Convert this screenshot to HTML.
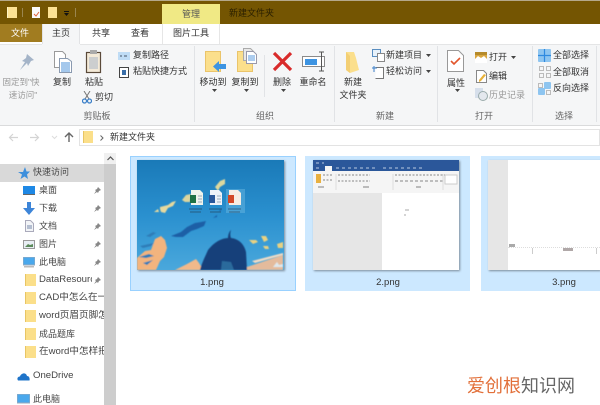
<!DOCTYPE html>
<html><head><meta charset="utf-8">
<style>
html,body{margin:0;padding:0;background:#fff}
#p{position:relative;width:600px;height:405px;overflow:hidden;background:#fff;font:9px/12px "Liberation Sans","Noto Sans CJK SC",sans-serif;color:#333;filter:blur(.35px)}
#p div,#p span,#p svg{position:absolute}
.t{white-space:nowrap}
.c{text-align:center;transform:translateX(-50%)}
.g{color:#a0a0a0}
.sep{width:1px;background:#e1e3e6;top:46px;height:76px}
.n{left:39px;color:#444;white-space:nowrap;width:65px;overflow:hidden}
.l{font-size:9.600px}
.pin{left:94px;width:7px;height:7px}
.f{left:25px;width:10px;height:12px;background:#fbdf8a;border-left:1px solid #e8c564}
</style></head><body>
<div id="p">
<!-- title bar -->
<div style="left:0;top:0;width:600px;height:24px;background:#745502"></div>
<div style="left:0;top:0;width:600px;height:1px;background:#b5a88a"></div>
<div style="left:7px;top:7px;width:9px;height:11px;background:#fde293;border-left:1px solid #fff2c2"></div>
<div style="left:22px;top:8px;width:1px;height:9px;background:#9a8650"></div>
<div style="left:32px;top:7px;width:8px;height:11px;background:#fafafa"></div>
<svg style="left:32px;top:9px" width="9" height="9"><path d="M2 5l2 2 3-4" fill="none" stroke="#e0623a" stroke-width="1"/></svg>
<div style="left:48px;top:7px;width:9px;height:11px;background:#fde293"></div>
<div style="left:64px;top:11px;width:5px;height:1px;background:#111"></div>
<svg style="left:64px;top:13px" width="6" height="3"><path d="M0 0h5l-2.500 3z" fill="#111"/></svg>
<div style="left:75px;top:8px;width:1px;height:9px;background:#9a8650"></div>
<div style="left:162px;top:4px;width:58px;height:20px;background:#f0e985"></div>
<div class="t c" style="left:191px;top:8px;color:#555">管理</div>
<div class="t" style="left:229px;top:7px;color:#2b2000">新建文件夹</div>
<!-- tabs -->
<div style="left:0;top:24px;width:42px;height:18px;background:#a17c20"></div>
<div class="t c" style="left:20px;top:27px;color:#fff">文件</div>
<div style="left:42px;top:24px;width:38px;height:21px;background:#f5f6f7;border-left:1px solid #e2e3e5;border-right:1px solid #e2e3e5;box-sizing:border-box"></div>
<div class="t c" style="left:61px;top:27px;color:#333">主页</div>
<div class="t c" style="left:101px;top:27px">共享</div>
<div class="t c" style="left:140px;top:27px">查看</div>
<div style="left:162px;top:24px;width:58px;height:20px;background:#fff;border-left:1px solid #e6e6e6;border-right:1px solid #e6e6e6;box-sizing:border-box"></div>
<div class="t c" style="left:191px;top:27px">图片工具</div>
<!-- ribbon -->
<div style="left:0;top:44px;width:600px;height:81px;background:#f5f6f7;border-bottom:1px solid #dadbdc"></div>
<div style="left:0;top:44px;width:42px;height:1px;background:#e4e5e6"></div>
<div style="left:80px;top:44px;width:520px;height:1px;background:#e4e5e6"></div>
<div class="sep" style="left:194px"></div><div class="sep" style="left:334px"></div><div class="sep" style="left:437px"></div><div class="sep" style="left:532px"></div><div class="sep" style="left:596px"></div>
<div class="sep" style="left:264px;top:55px;height:42px"></div>
<!-- pin -->
<svg style="left:16px;top:53px" width="20" height="18"><path d="M11 1l7 6-3 1-3 5-1 -3-7 7 5-8-3-1 4-3z" fill="#a4b4c8"/></svg>
<div class="t c g" style="left:21px;top:76px;font-size:8.500px;color:#999">固定到"快</div>
<div class="t c g" style="left:23px;top:89px;font-size:8.500px;color:#999">速访问"</div>
<!-- copy -->
<svg style="left:53px;top:50px" width="20" height="24"><path d="M1.500 1.500h8l3 3v13h-11z" fill="#fff" stroke="#9a9a9a"/><path d="M6.500 8.500h8l4 3v11h-12z" fill="#fff" stroke="#8a9ab0"/><path d="M8 13h9M8 15h9M8 17h9M8 19h9M8 21h9" stroke="#4a90d8" stroke-width="1"/></svg>
<div class="t c" style="left:62px;top:76px">复制</div>
<!-- paste -->
<svg style="left:85px;top:49px" width="18" height="25"><rect x="1.500" y="3.500" width="14" height="20" fill="#f4ead8" stroke="#5a4a3a" stroke-width="1.200"/><rect x="5" y="1" width="7" height="4" fill="#aaa"/><path d="M4 9h9M4 11h9M4 13h9M4 15h9M4 17h9M4 19h9" stroke="#8aa0c0" stroke-width=".8"/></svg>
<div class="t c" style="left:94px;top:76px">粘贴</div>
<svg style="left:82px;top:91px" width="10" height="13"><path d="M2 0l5 8M8 0L3 8" stroke="#777" fill="none"/><circle cx="2.500" cy="10" r="2" fill="none" stroke="#3a7fc8" stroke-width="1.200"/><circle cx="7.500" cy="10" r="2" fill="none" stroke="#3a7fc8" stroke-width="1.200"/></svg>
<div class="t" style="left:95px;top:91px">剪切</div>
<div style="left:118px;top:52px;width:12px;height:8px;background:#bfdcf5"></div>
<svg style="left:119px;top:53px" width="10" height="6"><path d="M1 3h2M5 3h3" stroke="#456" stroke-width="1"/></svg>
<div class="t" style="left:133px;top:49px">复制路径</div>
<svg style="left:119px;top:66px" width="11" height="12"><rect x=".5" y="1.500" width="9" height="10" fill="#fff" stroke="#444"/><rect x="3" y="4" width="4" height="5" fill="#3a6ea8"/></svg>
<div class="t" style="left:133px;top:65px">粘贴快捷方式</div>
<div class="t c" style="left:97px;top:110px;color:#666">剪贴板</div>
<!-- move to -->
<div style="left:205px;top:51px;width:16px;height:21px;background:#fbdf8c;border:1px solid #eac46a;box-sizing:border-box"></div>
<svg style="left:213px;top:60px" width="13" height="13"><path d="M0 6.500L6 1v3h7v5H6v3z" fill="#3d94e2"/></svg>
<div class="t c" style="left:213px;top:76px">移动到</div>
<svg style="left:212px;top:89px" width="5" height="3"><path d="M0 0h5L2.500 3z" fill="#444"/></svg>
<!-- copy to -->
<div style="left:237px;top:51px;width:16px;height:21px;background:#fbdf8c;border:1px solid #eac46a;box-sizing:border-box"></div>
<svg style="left:243px;top:48px" width="14" height="17"><path d="M.5 .5h7l3 3v9H.5z" fill="#e8e8e8" stroke="#aaa"/><path d="M3.500 3.500h7l3 3v9H3.500z" fill="#fff" stroke="#99a"/><path d="M5 8h7M5 10h7M5 12h7" stroke="#5a9ade"/></svg>
<div class="t c" style="left:245px;top:76px">复制到</div>
<svg style="left:244px;top:89px" width="5" height="3"><path d="M0 0h5L2.500 3z" fill="#444"/></svg>
<!-- delete -->
<svg style="left:272px;top:51px" width="21" height="21"><path d="M2 2l17 17M19 2L2 19" stroke="#d92b2b" stroke-width="3.200"/></svg>
<div class="t c" style="left:282px;top:76px">删除</div>
<svg style="left:281px;top:89px" width="5" height="3"><path d="M0 0h5L2.500 3z" fill="#444"/></svg>
<!-- rename -->
<svg style="left:302px;top:51px" width="24" height="21"><rect x=".5" y="5.500" width="22" height="10" fill="#fff" stroke="#8a8a8a"/><rect x="3" y="8" width="12" height="6" fill="#3d94e2"/><path d="M17 1h5M17 20h5M19.500 1v19" stroke="#555" fill="none"/></svg>
<div class="t c" style="left:313px;top:76px">重命名</div>
<div class="t c" style="left:265px;top:110px;color:#666">组织</div>
<!-- new folder -->
<svg style="left:345px;top:51px" width="16" height="22"><path d="M1 1h8l2 6 3 12-9 3-4-3z" fill="#fbdf8c"/><path d="M1 1l0 18 4 3V5z" fill="#f3cf74"/></svg>
<div class="t c" style="left:353px;top:76px">新建</div>
<div class="t c" style="left:353px;top:89px">文件夹</div>
<svg style="left:372px;top:49px" width="13" height="13"><rect x=".5" y=".5" width="8" height="7" fill="#e8f2fb" stroke="#5a8ec0"/><rect x="5.500" y="4.500" width="7" height="8" fill="#fff" stroke="#888"/></svg>
<div class="t" style="left:386px;top:49px">新建项目</div>
<svg style="left:426px;top:54px" width="5" height="3"><path d="M0 0h5L2.500 3z" fill="#444"/></svg>
<svg style="left:372px;top:65px" width="12" height="14"><path d="M3.500 2.500h8v11h-8" fill="#fff" stroke="#777"/><path d="M0 3h5M2 1v6" stroke="#3a7fc8" fill="none"/></svg>
<div class="t" style="left:386px;top:65px">轻松访问</div>
<svg style="left:426px;top:70px" width="5" height="3"><path d="M0 0h5L2.500 3z" fill="#444"/></svg>
<div class="t c" style="left:385px;top:110px;color:#666">新建</div>
<!-- properties -->
<svg style="left:447px;top:50px" width="18" height="23"><path d="M.5 .5h11l5 5v16H.5z" fill="#fff" stroke="#999"/><path d="M4 11l3 3 6-6" fill="none" stroke="#e2562c" stroke-width="1.600"/></svg>
<div class="t c" style="left:456px;top:77px">属性</div>
<svg style="left:455px;top:89px" width="5" height="3"><path d="M0 0h5L2.500 3z" fill="#444"/></svg>
<svg style="left:475px;top:52px" width="12" height="11"><rect width="12" height="11" fill="#fff"/><rect width="12" height="4" fill="#b58a2a"/><path d="M0 7l3-3 3 2 3-2 3 3v-4H0z" fill="#d9a640"/></svg>
<div class="t" style="left:489px;top:51px">打开</div>
<svg style="left:511px;top:56px" width="5" height="3"><path d="M0 0h5L2.500 3z" fill="#444"/></svg>
<svg style="left:476px;top:70px" width="11" height="13"><path d="M.5 .5h7l3 3v9H.5z" fill="#fff" stroke="#888"/><path d="M3 10l5-6 2 1-5 6-2 1z" fill="#e8b23a"/></svg>
<div class="t" style="left:489px;top:70px">编辑</div>
<svg style="left:475px;top:88px" width="13" height="13"><rect x="0" y="0" width="8" height="10" fill="#d6dfeb"/><circle cx="8" cy="8" r="4.500" fill="#e4e8ee" stroke="#9aa"/></svg>
<div class="t" style="left:489px;top:89px;color:#999">历史记录</div>
<div class="t c" style="left:484px;top:110px;color:#666">打开</div>
<!-- select -->
<svg style="left:538px;top:49px" width="13" height="13"><rect width="13" height="13" rx="1" fill="#8ec5f0"/><path d="M6.500 0v13M0 6.500h13" stroke="#2f8ae0" stroke-width="1.200"/></svg>
<div class="t" style="left:553px;top:49px">全部选择</div>
<svg style="left:539px;top:66px" width="12" height="12"><rect x=".5" y=".5" width="4" height="4" fill="none" stroke="#bbb"/><rect x="7.500" y=".5" width="4" height="4" fill="none" stroke="#bbb"/><rect x=".5" y="7.500" width="4" height="4" fill="none" stroke="#bbb"/><rect x="7.500" y="7.500" width="4" height="4" fill="none" stroke="#bbb"/></svg>
<div class="t" style="left:553px;top:66px">全部取消</div>
<svg style="left:538px;top:82px" width="13" height="13"><rect x="6" y="0" width="7" height="7" rx="1" fill="#8ec5f0"/><rect x="0" y="6" width="7" height="7" rx="1" fill="#8ec5f0"/><rect x=".5" y="1.500" width="4" height="4" fill="none" stroke="#bbb"/><rect x="8.500" y="8.500" width="4" height="4" fill="none" stroke="#bbb"/></svg>
<div class="t" style="left:553px;top:82px">反向选择</div>
<div class="t c" style="left:564px;top:110px;color:#666">选择</div>
<!-- address -->
<svg style="left:8px;top:132px" width="50" height="11"><path d="M10 5.500H2M5 2L1.500 5.500 5 9" fill="none" stroke="#d4d4d4" stroke-width="1.200"/><path d="M32 5.500h8M37 2l3.500 3.500L37 9" transform="translate(-10 0)" fill="none" stroke="#d4d4d4" stroke-width="1.200"/><path d="M44 4l2.500 2.500L49 4" fill="none" stroke="#ddd"/></svg>
<svg style="left:63px;top:131px" width="12" height="12"><path d="M6 11V2M2 6l4-4 4 4" fill="none" stroke="#666" stroke-width="1.400"/></svg>
<div style="left:79px;top:129px;width:521px;height:17px;box-sizing:border-box;border:1px solid #e3e3e3;background:#fff"></div>
<div style="left:83px;top:131px;width:9px;height:12px;background:#fbdf8a;border-left:1px solid #e8c564"></div>
<svg style="left:100px;top:135px" width="4" height="6"><path d="M.5 .5L3 3 .5 5.500" fill="none" stroke="#666"/></svg>
<div class="t" style="left:110px;top:131px">新建文件夹</div>
<!-- nav pane -->
<div style="left:0;top:164px;width:104px;height:18px;background:#d9d9d9"></div>
<div style="left:104px;top:153px;width:12px;height:252px;background:#f0f0f0"></div>
<div style="left:104px;top:164px;width:12px;height:241px;background:#cdcdcd"></div>
<svg style="left:107px;top:156px" width="7" height="5"><path d="M.5 4L3.500 1 6.500 4" fill="none" stroke="#555" stroke-width="1.200"/></svg>
<svg style="left:18px;top:167px" width="12" height="12"><path d="M7 0l1.500 4.500H12L9 7.500 10 12 6.500 9.500 2.500 12 4 7.500 0 5h5z" fill="#3d8fdc"/></svg>
<div class="n" style="left:33px;top:166px">快速访问</div>
<div style="left:23px;top:186px;width:12px;height:8px;background:#1e88e5;border-bottom:1px solid #666"></div>
<div class="n" style="top:184px">桌面</div>
<svg style="left:23px;top:202px" width="12" height="13"><path d="M4 0h4v6h4l-6 7-6-7h4z" fill="#3d85d8"/></svg>
<div class="n" style="top:202px">下载</div>
<svg style="left:25px;top:220px" width="9" height="12"><path d="M.5 .5h5l3 3v8H.5z" fill="#f2f4f7" stroke="#aab"/><path d="M2 6h5M2 8h5" stroke="#78a"/></svg>
<div class="n" style="top:220px">文档</div>
<svg style="left:23px;top:240px" width="12" height="9"><rect x=".5" y=".5" width="11" height="8" fill="#e8eef4" stroke="#999"/><path d="M2 7l3-3 2 1 3-1v3z" fill="#5b8a5a"/></svg>
<div class="n" style="top:238px">图片</div>
<svg style="left:23px;top:257px" width="12" height="11"><rect width="12" height="8" fill="#4aa8ec" stroke="#9ab"/><rect x="1" y="9" width="10" height="1.500" fill="#bbb"/></svg>
<div class="n" style="top:256px">此电脑</div>
<div class="n l" style="top:274px;width:53px">DataResource</div>
<div class="n l" style="top:292px;width:65px">CAD中怎么在一</div>
<div class="n l" style="top:310px;width:65px">word页眉页脚怎</div>
<div class="n" style="top:328px">成品题库</div>
<div class="n l" style="top:346px;width:65px">在word中怎样把</div>
<div class="f" style="top:274px"></div><div class="f" style="top:292px"></div><div class="f" style="top:310px"></div><div class="f" style="top:328px"></div><div class="f" style="top:346px"></div>
<svg class="pin" style="top:187px"><path d="M4 0l3 3-2 1-1 2-1-1-3 2 2-3-1-1 2-1z" fill="#888"/></svg>
<svg class="pin" style="top:205px"><path d="M4 0l3 3-2 1-1 2-1-1-3 2 2-3-1-1 2-1z" fill="#888"/></svg>
<svg class="pin" style="top:223px"><path d="M4 0l3 3-2 1-1 2-1-1-3 2 2-3-1-1 2-1z" fill="#888"/></svg>
<svg class="pin" style="top:241px"><path d="M4 0l3 3-2 1-1 2-1-1-3 2 2-3-1-1 2-1z" fill="#888"/></svg>
<svg class="pin" style="top:259px"><path d="M4 0l3 3-2 1-1 2-1-1-3 2 2-3-1-1 2-1z" fill="#888"/></svg>
<svg class="pin" style="top:277px"><path d="M4 0l3 3-2 1-1 2-1-1-3 2 2-3-1-1 2-1z" fill="#888"/></svg>
<svg style="left:17px;top:372px" width="13" height="9"><path d="M1 8.500C-.5 6.500 1 4.500 3 4.500 4 1 9 0 10 4c2 0 3 2 2.500 4.500z" fill="#1f74c9"/></svg>
<div class="n l" style="left:33px;top:370px">OneDrive</div>
<svg style="left:17px;top:394px" width="13" height="11"><rect width="13" height="9" fill="#4aa8ec" stroke="#9ab"/></svg>
<div class="n" style="left:33px;top:393px">此电脑</div>
<!-- item 1 -->
<div style="left:130px;top:156px;width:166px;height:135px;box-sizing:border-box;background:#cce8ff;border:1px solid #99d1ff"></div>
<svg style="left:137px;top:160px;filter:drop-shadow(1px 1px 1px rgba(0,0,0,.4))" width="147" height="110" viewBox="0 0 147 110">
<defs><linearGradient id="a" x1="0" y1="0" x2="0" y2="1"><stop offset="0" stop-color="#1a7ab8"/><stop offset=".5" stop-color="#2a90cf"/><stop offset="1" stop-color="#4aa8dc"/></linearGradient><filter id="b"><feGaussianBlur stdDeviation=".5"/></filter></defs>
<rect width="147" height="110" fill="url(#a)"/>
<g filter="url(#b)">
<path d="M0 98l8-7 6-1 4-11 6-3 4 4 2 8-3 9-4 4-4 9H0z" fill="#f2b47e"/>
<path d="M3 86l9-2 5-1-3 3-8 2zM9 76l7-4 3 1-6 4zM2 97l10-3 5 2-8 2zM6 103l10-3-6 5z" fill="#2f7db8"/>
<path d="M38 110l12-6 9-5 3 4 4 7z" fill="#f0b98a"/>
<path d="M110 107l36-12v15h-36z" fill="#e4bb9c"/>
<path d="M115 101l31-8v2l-28 8z" fill="#f0dcc6"/>
<path d="M17 52l4-3 1 3zM23 47l8-2 4-3 4-1-3 5-5 2-3 5-4-1-1-3z" fill="#e6d99e"/>
<path d="M45 40l4-5 5-1-1 8-5 0z" fill="#dcd59e"/>
<path d="M78 27l5-6 5-2 0 5-5 3-2 4z" fill="#dcd89e"/>
<path d="M34 76l10-4 6-5 8-4 6-1 5-1-2 5-7 3-6 2-8 6-7 0z" fill="#1c5fa6"/>
<path d="M76 58l4-3 0 2zM82 51l2-2 0 2z" fill="#1c5fa6"/>
<path d="M112 80l7 0 2 2-5 2zM124 76l5 0 2 4-4 2zM126 86l5 0 1 3-4 0zM140 84l6-2 0 6-5 0z" fill="#e8d182"/>
<path d="M63 110c2-8 6-15 8-20 6-8 14-12 20-12 0-3 1-6 3-8-1 3-1 6 0 8 8 1 13 6 15 14l1 18z" fill="#133f7a"/>
<path d="M85 101l9 1 3 8H84z" fill="#2c6a9c"/>
<path d="M136 107l4-5 2 3 4-1v3h-10z" fill="#dfe8ec"/>
</g>
<rect x="89" y="29" width="19" height="24" fill="#62b2de" opacity=".55"/>
<path d="M54 30h9l3 3v12H54z" fill="#eef3ec"/><rect x="53" y="35" width="6" height="8" fill="#1e7145"/>
<path d="M73 30h9l3 3v12H73z" fill="#eef1f8"/><rect x="72" y="35" width="6" height="8" fill="#2b579a"/>
<path d="M92 30h9l3 3v12H92z" fill="#f7ece2"/><rect x="91" y="35" width="6" height="8" fill="#d24726"/>
<path d="M61 36h4M61 39h4M61 42h4M80 36h4M80 39h4M80 42h4" stroke="#9ab" stroke-width="1"/>
<path d="M52 49h13M53 52h11M72 49h13M73 52h11M91 49h13M92 52h11" stroke="#234" stroke-width="1" opacity=".55"/>
</svg>
<div class="t c" style="left:212px;top:277px;font-size:9.500px;color:#333">1.png</div>
<!-- item 2 -->
<div style="left:305px;top:156px;width:165px;height:135px;background:#cce8ff"></div>
<svg style="left:313px;top:160px;filter:drop-shadow(1px 1px 1px rgba(0,0,0,.4))" width="146" height="110" viewBox="0 0 146 110">
<rect width="146" height="110" fill="#fff"/>
<rect width="146" height="33" fill="#f5f5f5"/><rect width="146" height="11" fill="#2b579a"/>
<rect y="33" width="69" height="77" fill="#e6e6e6"/>
<rect x="12" y="6" width="7" height="6" fill="#f5f5f5"/>
<path d="M3 8h5M23 8h40M70 8h40M3 3h8" stroke="#b8c8e0" stroke-width="1" stroke-dasharray="3 3"/>
<rect x="3" y="14" width="5" height="9" fill="#e8b040"/>
<path d="M10 15h9M10 20h9M25 15h32M25 21h32M82 15h50" stroke="#999" stroke-width="1.500" stroke-dasharray="2 1.500" opacity=".8"/>
<path d="M82 21h48" stroke="#999" stroke-width="1.500" stroke-dasharray="3 2" opacity=".8"/>
<path d="M23 14v16M80 14v16M130 14v16" stroke="#ddd"/>
<rect x="132" y="15" width="12" height="9" fill="#fff" stroke="#ccc"/>
<path d="M5 27h6M50 27h6M103 27h5" stroke="#999" stroke-width="1.200"/>
<path d="M92 50h4M92 54v2" stroke="#aaa"/>
</svg>
<div class="t c" style="left:388px;top:277px;font-size:9.500px;color:#333">2.png</div>
<!-- item 3 -->
<div style="left:481px;top:156px;width:119px;height:135px;background:#cce8ff"></div>
<div style="left:488px;top:160px;width:112px;height:110px;background:#fff;box-shadow:1px 1px 2px rgba(0,0,0,.4)"></div>
<div style="left:488px;top:160px;width:20px;height:110px;background:#e6e6e6"></div>
<div style="left:508px;top:247px;width:92px;height:0;border-top:1px dotted #ddd"></div>
<div style="left:509px;top:244px;width:6px;height:3px;background:#aaa"></div>
<div style="left:532px;top:248px;width:1px;height:6px;background:#ccc"></div>
<div style="left:563px;top:248px;width:10px;height:3px;background:#b0a8a8"></div>
<div style="left:596px;top:248px;width:1px;height:6px;background:#ccc"></div>
<div class="t c" style="left:564px;top:277px;font-size:9.500px;color:#333">3.png</div>
<!-- watermark -->
<div class="t" style="left:467px;top:375px;font-size:18px;line-height:22px;color:#e2703a">爱创根<span style="position:static;color:#666">知识网</span></div>
</div>
</body></html>
